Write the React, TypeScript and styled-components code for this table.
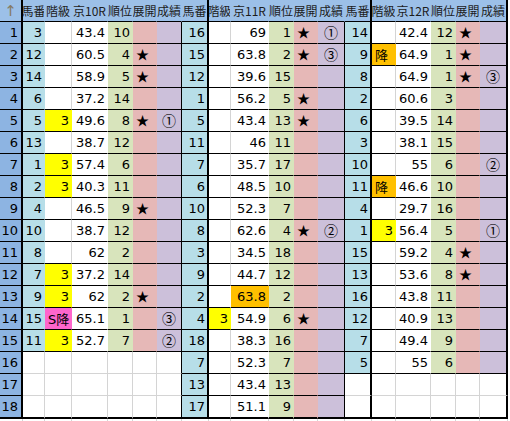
import React from "react";
import styled, { createGlobalStyle } from "styled-components";

const GlobalStyle = createGlobalStyle`
  html, body {
    margin: 0;
    padding: 0;
    background: #fff;
    overflow: hidden;
  }
`;

const BLACK = "#000";
const GRID = "#d4d4d4";
const WHITE = "#fff";
const HEAD = "#9cc0e8";
const ROWHEAD = "#8db4e2";
const NO_BG = "#b7dee8";
const RANK_BG = "#d8e4bc";
const STAR_BG = "#e6b8b7";
const RESULT_BG = "#ccc0da";
const GRADE_BG: Record<string, string> = {
  "3": "#ffff00",
  "S降": "#ff66cc",
  "降": "#ffc000",
};

type Entry = {
  no: number;
  score: string;
  rank: number;
  grade?: string;
  star?: boolean;
  result?: string;
  hot?: boolean;
};

const r = (no: number, score: string, rank: number, extra: Partial<Entry> = {}): Entry => ({
  no,
  score,
  rank,
  ...extra,
});

const races: { title: string; widths: number[]; rows: Entry[] }[] = [
  {
    title: "京10R",
    widths: [22, 27, 36, 25, 24, 25],
    rows: [
      r(3, "43.4", 10),
      r(12, "60.5", 4, { star: true }),
      r(14, "58.9", 5, { star: true }),
      r(6, "37.2", 14),
      r(5, "49.6", 8, { grade: "3", star: true, result: "①" }),
      r(13, "38.7", 12),
      r(1, "57.4", 6, { grade: "3" }),
      r(2, "40.3", 11, { grade: "3" }),
      r(4, "46.5", 9, { star: true }),
      r(10, "38.7", 12),
      r(8, "62", 2),
      r(7, "37.2", 14, { grade: "3" }),
      r(9, "62", 2, { grade: "3", star: true }),
      r(15, "65.1", 1, { grade: "S降", result: "③" }),
      r(11, "52.7", 7, { grade: "3", result: "②" }),
    ],
  },
  {
    title: "京11R",
    widths: [27, 22, 38, 25, 24, 27],
    rows: [
      r(16, "69", 1, { star: true, result: "①" }),
      r(15, "63.8", 2, { star: true, result: "③" }),
      r(12, "39.6", 15),
      r(1, "56.2", 5, { star: true }),
      r(5, "43.4", 13, { star: true }),
      r(11, "46", 11),
      r(7, "35.7", 17),
      r(6, "48.5", 10),
      r(10, "52.3", 7),
      r(8, "62.6", 4, { star: true, result: "②" }),
      r(3, "34.5", 18),
      r(9, "44.7", 12),
      r(2, "63.8", 2, { hot: true }),
      r(4, "54.9", 6, { grade: "3", star: true }),
      r(18, "38.3", 16),
      r(7, "52.3", 7),
      r(13, "43.4", 13),
      r(17, "51.1", 9),
    ],
  },
  {
    title: "京12R",
    widths: [27, 24, 35, 25, 24, 28],
    rows: [
      r(14, "42.4", 12, { star: true }),
      r(9, "64.9", 1, { grade: "降", star: true }),
      r(8, "64.9", 1, { star: true, result: "③" }),
      r(2, "60.6", 3),
      r(6, "39.5", 14),
      r(3, "38.1", 15),
      r(10, "55", 6, { result: "②" }),
      r(11, "46.6", 10, { grade: "降" }),
      r(4, "29.7", 16),
      r(1, "56.4", 5, { grade: "3", result: "①" }),
      r(15, "59.2", 4, { star: true }),
      r(13, "53.6", 8, { star: true }),
      r(16, "43.8", 11),
      r(12, "40.9", 13),
      r(7, "49.4", 9),
      r(5, "55", 6),
    ],
  },
];

const HEADERS = ["馬番", "階級", "", "順位", "展開", "成績"];
const ROWS = 18;

const Sheet = styled.div<{ $cols: string }>`
  display: grid;
  grid-template-columns: ${(p) => p.$cols};
  grid-template-rows: 22px repeat(17, 22px) 23px 8px;
  width: max-content;
`;

type Align = "left" | "right" | "center";

const Cell = styled.div<{
  $bg: string;
  $align: Align;
  $rc: string;
  $rw: number;
  $bc: string;
  $bw: number;
}>`
  box-sizing: border-box;
  display: flex;
  align-items: center;
  justify-content: ${(p) =>
    p.$align === "right" ? "flex-end" : p.$align === "center" ? "center" : "flex-start"};
  padding: 0 ${(p) => (p.$align === "left" ? "3px" : "2px")};
  background: ${(p) => p.$bg};
  border-right: ${(p) => p.$rw}px solid ${(p) => p.$rc};
  border-bottom: ${(p) => p.$bw}px solid ${(p) => p.$bc};
  overflow: hidden;
  white-space: nowrap;
  font-family: "DejaVu Sans", "Noto Sans CJK JP", sans-serif;
  font-size: 13px;
  color: #000;
`;

const HeadCell = styled(Cell)`
  padding: 0;
  font-family: "Noto Sans CJK JP", "DejaVu Sans", sans-serif;
  font-size: 12px;
  color: #1c1c1c;
`;

const Corner = styled(HeadCell)`
  font-family: "DejaVu Sans", sans-serif;
  font-size: 15px;
  color: #857a63;
`;

const RowHead = styled(Cell)`
  padding-right: 3px;
`;

const Star = styled.span`
  font-family: "Noto Sans CJK JP", sans-serif;
  font-size: 13px;
  line-height: 1;
  margin-bottom: 2px;
`;

const Placing = styled.span`
  font-family: "Noto Sans CJK JP", sans-serif;
  font-size: 14px;
  line-height: 1;
  margin-bottom: 2px;
`;

type Spec = {
  text: React.ReactNode;
  bg: string;
  align: Align;
  rc: string;
  rw: number;
};

function raceCells(b: number, e: Entry | undefined): Spec[] {
  const gradeBg = e?.grade ? GRADE_BG[e.grade] : WHITE;
  const scoreBg = e?.hot ? GRADE_BG["降"] : WHITE;
  const fill = (c: string) => (e ? c : WHITE);
  return [
    {
      text: e?.no,
      bg: fill(NO_BG),
      align: "right",
      rc: b === 0 ? (e ? NO_BG : GRID) : BLACK,
      rw: b === 0 ? 1 : 2,
    },
    {
      text: e?.grade,
      bg: gradeBg,
      align: e?.grade === "3" ? "right" : "left",
      rc: gradeBg === WHITE && scoreBg === WHITE ? GRID : gradeBg,
      rw: 1,
    },
    { text: e?.score, bg: scoreBg, align: "right", rc: e ? scoreBg : GRID, rw: 1 },
    { text: e?.rank, bg: fill(RANK_BG), align: "right", rc: e ? RANK_BG : GRID, rw: 1 },
    {
      text: e?.star ? <Star>★</Star> : null,
      bg: fill(STAR_BG),
      align: "left",
      rc: e ? STAR_BG : GRID,
      rw: 1,
    },
    {
      text: e?.result ? <Placing>{e.result}</Placing> : null,
      bg: fill(RESULT_BG),
      align: "center",
      rc: BLACK,
      rw: b === 2 ? 2 : 1,
    },
  ];
}

export default function App() {
  const cols = [23, ...races.flatMap((rc) => rc.widths)].map((w) => `${w}px`).join(" ");

  const header = races.flatMap((race, b) =>
    HEADERS.map((h, c) => {
      const thick = (c === 0 && b > 0) || (c === 5 && b === 2);
      return (
        <HeadCell
          key={`h-${b}-${c}`}
          $bg={HEAD}
          $align="center"
          $rc={thick ? BLACK : HEAD}
          $rw={thick ? 2 : 1}
          $bc={BLACK}
          $bw={1}
        >
          {c === 2 ? race.title : h}
        </HeadCell>
      );
    })
  );

  const body = Array.from({ length: ROWS }, (_, i) => {
    const last = i === ROWS - 1;
    return [
      <RowHead
        key={`n-${i}`}
        $bg={ROWHEAD}
        $align="right"
        $rc={BLACK}
        $rw={2}
        $bc={BLACK}
        $bw={last ? 2 : 1}
      >
        {i + 1}
      </RowHead>,
      ...races.flatMap((race, b) => {
        const e = race.rows[i];
        return raceCells(b, e).map((s, c) => (
          <Cell
            key={`c-${i}-${b}-${c}`}
            $bg={s.bg}
            $align={s.align}
            $rc={s.rc}
            $rw={s.rw}
            $bc={last ? BLACK : e ? BLACK : GRID}
            $bw={last ? 2 : 1}
          >
            {s.text}
          </Cell>
        ));
      }),
    ];
  });

  const tail = Array.from({ length: 19 }, (_, c) => (
    <Cell
      key={`t-${c}`}
      $bg={WHITE}
      $align="left"
      $rc={GRID}
      $rw={1}
      $bc={GRID}
      $bw={1}
    />
  ));

  return (
    <>
      <GlobalStyle />
      <Sheet $cols={cols}>
        <Corner $bg={HEAD} $align="center" $rc={BLACK} $rw={2} $bc={BLACK} $bw={1}>
          ↑
        </Corner>
        {header}
        {body}
        {tail}
      </Sheet>
    </>
  );
}
